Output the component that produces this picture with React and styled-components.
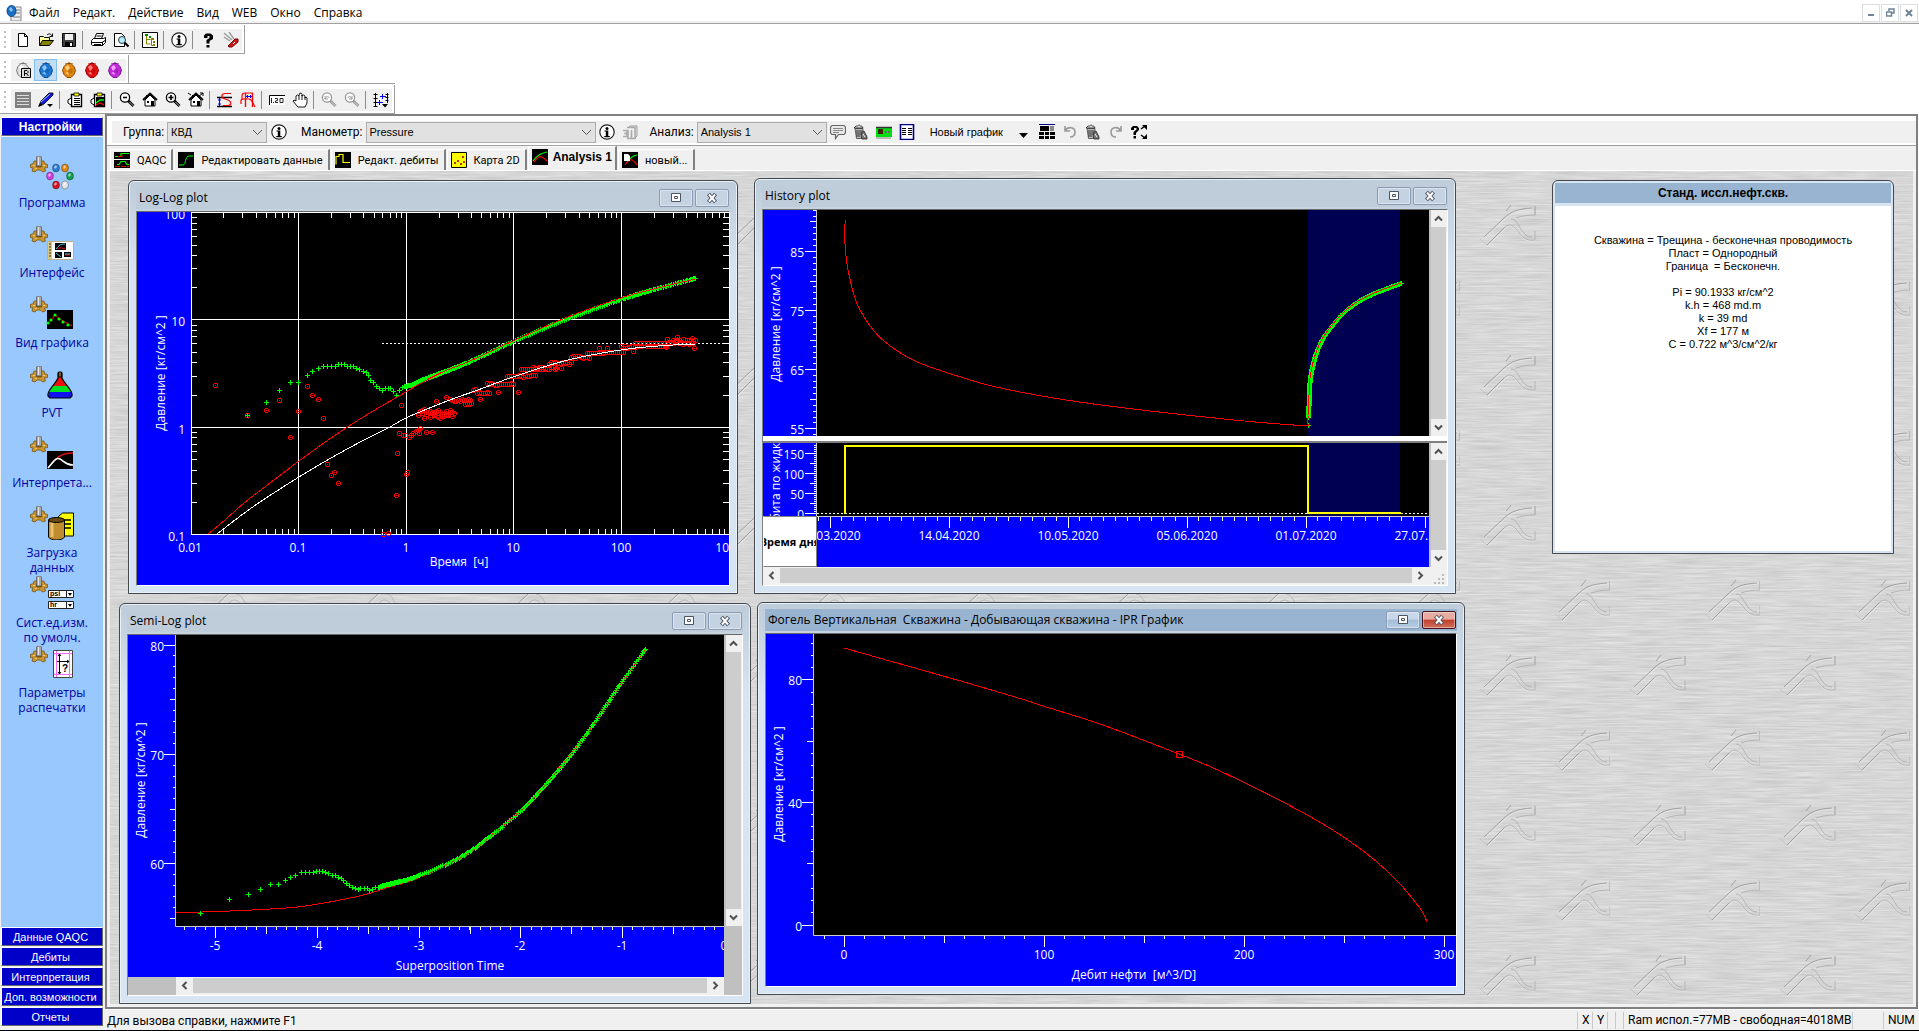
import React, { useState } from 'react';
import styled, { createGlobalStyle } from 'styled-components';

const ui = '"Open Sans", "Noto Sans", sans-serif';
const narrow = 'Roboto, "Open Sans", sans-serif';
const sans = '"Liberation Sans", Arial, sans-serif';

const GlobalStyle = createGlobalStyle`
  * { box-sizing: border-box; }
  body {
    margin: 0;
    background: #fff;
    color: #000;
    font-family: ${ui};
    font-size: 12px;
  }
  button { font-family: inherit; padding: 0; }
`;

/* ---------- helpers ---------- */

// Catmull-Rom interpolation through the knots
function spline(knots, parts = 12) {
  const out = [];
  for (let i = 0; i < knots.length - 1; i++) {
    const a = knots[i - 1] || knots[i];
    const b = knots[i];
    const c = knots[i + 1];
    const d = knots[i + 2] || c;
    for (let k = 0; k < parts; k++) {
      const t = k / parts;
      out.push([0, 1].map((n) => 0.5 * (2 * b[n] + (c[n] - a[n]) * t
        + (2 * a[n] - 5 * b[n] + 4 * c[n] - d[n]) * t * t
        + (3 * b[n] - a[n] - 3 * c[n] + d[n]) * t * t * t)));
    }
  }
  out.push(knots[knots.length - 1]);
  return out;
}

const toPath = (pts) => 'M' + pts.map(([x, y]) => `${x.toFixed(1)} ${y.toFixed(1)}`).join('L');
const line = (knots) => toPath(spline(knots));
const plus = (pts) => pts.map(([x, y]) => {
  const px = Math.round(x);
  const py = Math.round(y);
  return `M${px - 2} ${py}.5h5M${px}.5 ${py - 2}v5`;
}).join('');

const ticks = (from, to, step) => {
  const out = [];
  for (let v = from; v <= to + step / 100; v += step) out.push(v);
  return out;
};

const noise = (n) => {
  const s = Math.sin(n * 127.1) * 43758.5453;
  return s - Math.floor(s);
};

/* ---------- icons ---------- */

const gem = (light, mid, dark) => (
  <>
    <path d="M6 1.500h4l3 3 1.500 4-1.500 4-3 3H6l-3-3-1.500-4L3 4.500z" fill={mid} stroke={dark} />
    <path d="M4 5l3-2 2 3-3 3zM4 11l3-1 1 3z" fill={light} />
    <path d="M9 6l3 2-2 4-3-2z" fill={dark} opacity=".35" />
    <path d="M8 0v1M4.500 1l1 1M11.500 1l-1 1" stroke={dark} />
  </>
);

const info = (
  <>
    <circle cx="8" cy="8" r="7.2" fill="#fff" stroke="#222" strokeWidth="1.2" />
    <circle cx="8" cy="4.4" r="1.5" fill="#000" />
    <path d="M5.500 6.500H9.300V12h1.500v1.200h-5.500V12H6.800V7.500H5.500z" fill="#000" />
  </>
);

const lens = (c) => (
  <>
    <circle cx="6" cy="5.5" r="4.6" fill="#fff" stroke={c} strokeWidth="1.3" />
    <path d="M9.500 9l5 5" stroke={c} strokeWidth="2.800" />
    <path d="M10.500 10l4 4" stroke="#ddd" strokeWidth=".8" />
  </>
);

const home = (
  <>
    <path d="M3 8l5-5 5 5v6H3z" fill="#fff" stroke="#000" />
    <path d="M1 8l7-6.500L15 8" fill="none" stroke="#000" strokeWidth="1.800" />
    <path d="M4 3h2v3H4zM9 9h3v5H9zM5 9h2v2H5z" fill="#000" />
  </>
);

const clip = (
  <>
    <path d="M4.500 2.500h10v12h-10z" fill="#fff" stroke="#000" strokeWidth="1.400" />
    <path d="M7 1h5v3H7z" fill="#ff0" stroke="#000" strokeWidth=".8" />
    <path d="M4 6L1 8v3l3 2" fill="#fff" stroke="#000" />
  </>
);

const trash = (
  <>
    <path d="M2 4.500h8l-.5 10h-6z" fill="#b8b8b8" stroke="#444" strokeWidth=".8" />
    <path d="M1 4L3 2h1.500L6 .8 7.500 2 9 2.200l1 1.800z" fill="#ddd" stroke="#222" strokeWidth=".8" />
    <path d="M4 6v7M6 6v7M8 6v5" stroke="#333" />
    <path d="M9 8l2-1 3 6v2H9l-1-3z" fill="#777" stroke="#222" strokeWidth=".8" />
    <path d="M10 10l2 3" stroke="#eee" />
  </>
);

const blackTile = (inner) => (
  <>
    <path d="M0 0h16v16H0z" fill="#000" />
    <g fill="none">{inner}</g>
  </>
);

const glyphs = {
  doc: <><path d="M5 2h10v14H5z" fill="#eee" stroke="#888" /><path d="M10 5h4M10 8h4M7 12h7" stroke="#777" /><ellipse cx="5.500" cy="6" rx="4.500" ry="5.500" fill="#1c6fc4" stroke="#0b4a8c" /><path d="M3 4l2-2 2 3-2 2z" fill="#8cc8ff" /></>,
  blank: <path d="M3.500 1.500h6l3 3v10h-9zM9.500 1.500v3h3" fill="#fff" stroke="#000" />,
  open: <><path d="M1.500 13.500v-9h4l1 1h5v3" fill="#ffff9c" stroke="#000" /><path d="M1.500 13.500l3-5h11l-4 5z" fill="#848200" stroke="#000" /><path d="M9 3c2-2 4-1 5 1M14.500 1.500v3h-3" fill="none" stroke="#000" /></>,
  save: <><path d="M1.500 1.500h13v13h-13z" fill="#424242" stroke="#000" /><path d="M4 2h8v6H4z" fill="#f0f0f0" /><path d="M4 10h8v4H4z" fill="#000" /><path d="M9 11h2v3H9z" fill="#fff" /></>,
  print: <><path d="M4.500 6.500l2-5h7l-2 5M6.500 4h5" fill="#fff" stroke="#000" /><path d="M1.500 8.500l2-2h10l2-1v5l-3 3h-10l-1-1z" fill="#fff" stroke="#000" /><path d="M2 10.500h10l3-2M4 12.500h7M12.500 10v4" stroke="#000" fill="none" /></>,
  preview: <><path d="M1.500 1.500h7l3 3v10h-10z" fill="#fff" stroke="#000" /><circle cx="9" cy="8" r="3.500" fill="#aef0ff" stroke="#333" /><path d="M11.500 10.500l4 4" stroke="#000" strokeWidth="2.200" /></>,
  tree: <><path d="M.5.5h15v15H.5z" fill="#fff" stroke="#000" /><path d="M4.500 4v8h4M4.500 7.500h4M9.500 7v6.500h3" fill="none" stroke="#848200" /><path d="M3 2h3v2H3zM7 4h2v2H7z" fill="#080" /><path d="M9 6h3v2H9zM11 9h2v2h-2zM11 12h2v2h-2z" fill="#848200" /></>,
  info,
  help: <path d="M4 6V3.500L6 1.500h4.500L13 3.500V7L9.500 9v2.500h-3V8L9.500 6V4H7.500v2zM6.500 13h3v2.500h-3z" fill="#000" />,
  knife: <><path d="M1 1l8 7M1 5l6 4M6 0l5 7" stroke="#999" strokeWidth="1.300" /><path d="M5 14l7-7h3v3l-6 5H6z" fill="#d01818" stroke="#700" /><path d="M10 12l2-2" stroke="#fff" /></>,
  gemR: <>{gem('#fff', '#ddd', '#777')}<path d="M6.500 6.500h9v9h-9z" fill="#ddd" stroke="#000" /><path d="M9.500 14V8.500H12l1 1v1l-1 1H9.500M11.500 11.500L13.500 14" fill="none" stroke="#000" /></>,
  gemBlue: gem('#8cc8ff', '#1c78d2', '#0b4a8c'),
  gemOrange: gem('#ffce74', '#e08414', '#8c4c00'),
  gemRed: gem('#ff8080', '#e01010', '#900'),
  gemPurple: gem('#f4a0ff', '#c028d8', '#781090'),
  list: <><path d="M0 0h16v16H0z" fill="#808080" /><path d="M2 3.500h12M2 6.500h12M2 9.500h12M2 12.500h12" stroke="#ddd" /></>,
  pen: <><path d="M1 14l2-5L11 1l4 0v2L6 12z" fill="#1818d8" stroke="#000" strokeWidth=".8" /><path d="M3 10l9-8" stroke="#9cf" /><path d="M0 15l2-4 3 2zM9 12h6l-3 3z" fill="#000" /></>,
  clip: <>{clip}<path d="M7 6.500h6M7 8.500h6M7 10.500h6M7 12.500h6" stroke="#000" /></>,
  clipPlot: <>{clip}<path d="M6 5h8v9H6z" fill="#000" /><path d="M6 11l4-3h4" stroke="#0f0" fill="none" strokeWidth="1.300" /><path d="M6 13l4-2 4 2" stroke="#f00" fill="none" strokeWidth="1.300" /></>,
  zoomOut: <>{lens('#000')}<path d="M4 5.500h4" stroke="#000" strokeWidth="1.500" /></>,
  zoomIn: <>{lens('#000')}<path d="M3.500 5.500h5M6 3v5" stroke="#000" strokeWidth="1.700" /></>,
  home,
  homeAll: <>{home}<path d="M10 5l5-4M12 1h3v3M0 1l3 2" stroke="#000" fill="none" /></>,
  curveX: <><path d="M0 5.500h15M0 14.500h15" stroke="#000" strokeWidth="1.400" /><path d="M14 1.500H8c-4 0-4 4-1 5l5 2c3 2 2 5-1 5H6" fill="none" stroke="#f00" strokeWidth="1.200" /><path d="M2.500 6v8M1 8h3M1 12h3" stroke="#00f" /></>,
  curveY: <><path d="M5.500 1v14M12.500 1v14" stroke="#f00" strokeWidth="1.400" /><path d="M1 12V9c0-2 1-2 3-2h5c3 0 3 3 6 8M2 8V4c0-2 1-3 3-3h8" fill="none" stroke="#f00" strokeWidth="1.200" /><path d="M6 4.500h6M7.500 3v3M10.500 3v3" stroke="#00f" /></>,
  value: <><path d="M0 3h16v10H0z" fill="#fff" /><path d="M.5 13V3.500H16" fill="none" stroke="#000" /><path d="M2.500 6v5M4.500 10v1M6 6.500h2.500v2L6.500 9v1.500H9M11 6.500h3v4h-3z" fill="none" stroke="#222" /></>,
  hand: <path d="M5 14L1 9l1-1 2 1V4l1.500-1L7 4l.5-2.500L9 1l1 1.500V4l1.500-1L13 4v2l1-1 1 1v5l-2 4H6zM7 4v4M10 3v5M13 5v3" fill="#fff" stroke="#000" strokeWidth=".9" />,
  zoomPrev: <>{lens('#999')}<path d="M4 4v3h3M4 7c1-3 4-3 4-1" stroke="#999" fill="none" /></>,
  zoomNext: <>{lens('#999')}<path d="M8 4v3H5M8 7c-1-3-4-3-4-1" stroke="#999" fill="none" /></>,
  axes: <><path d="M2.500 1v14M.5 2.500h4M.5 6.500h4M.5 10.500h4M.5 14.500h4M14.500 1v10M12.500 2.500h3M12.500 5.500h3M12.500 8.500h3" stroke="#000" /><path d="M7 4.500h6M9.500 2v5M4 10.500h6M6.500 8v5" stroke="#00f" /><path d="M9 12h6l-3 3.500z" fill="#000" /></>,
  box: <><path d="M5 3.500h8v11H6V6M1 6.500h4v3H2M1 12.500h4v-3M9.500 6v8" fill="none" stroke="#aaa" strokeWidth="1.600" /><path d="M6 4l2-2h7v10l-2 2" stroke="#999" fill="none" /></>,
  note: <><path d="M2 1.500h12l1.500 1.500v6L14 10.500H8.500l-3 4v-4H2L.5 9V3z" fill="#e8e8e8" stroke="#666" strokeWidth="1.200" /><path d="M3 4.500h10M3 6.500h10M3 8.500h6" stroke="#888" /></>,
  trash,
  meter: <><path d="M0 3h16v10H0z" fill="#00e010" /><path d="M0 3.500h16" stroke="#333" strokeWidth="1.500" /><path d="M0 14h15" stroke="#bbb" strokeWidth="2" /><path d="M2 5h5v5H2z" fill="#402000" /><path d="M9 7h2v2H9zM12 7h2v2h-2z" fill="#666" /></>,
  report: <><path d="M1.500.5h13v15h-13z" fill="#fff" stroke="#000080" strokeWidth="1.600" /><path d="M3 4.500h4M9 4.500h4M3 6.500h4M9 6.500h4M3 8.500h4M9 8.500h4M3 10.500h4M9 10.500h4" stroke="#000" /></>,
  caret: <path d="M3 9h9l-4.500 5z" fill="#000" />,
  grid: <><path d="M0 .5h16" stroke="#00008b" /><path d="M1 2h9v5H1zM0 8h5v3H0zM6 8h4v3H6zM11 8h5v3h-5zM0 12h5v3H0zM6 12h4v3H6zM11 12h5v3h-5z" fill="#000" /><path d="M11 2h4v5h-4z" fill="#888" /></>,
  undo: <path d="M3 2v5h5M3.500 6.500C6 2 13 3 13 8c0 3-2 5-5 5" fill="none" stroke="#999" strokeWidth="1.600" />,
  redo: <path d="M13 2v5H8M12.500 6.500C10 2 3 3 3 8c0 3 2 5 5 5" fill="none" stroke="#999" strokeWidth="1.600" />,
  helpAll: <><path d="M0 6V4l2-2h4l2 2v2L5 9v2H2.500V8l3-2.500V4H3v2zM2.500 12H5v2.500H2.500z" fill="#000" /><path d="M11 1h5v5zM11 15h5v-5z" fill="#000" /><path d="M10 5l4-3M10 11l4 3" stroke="#000" strokeWidth="1.500" /></>,
  qaqc: blackTile(<><path d="M1 4.500h6V1.500h8M3 12.500h2l2-3h4l2 3h2" stroke="#0f0" strokeWidth="1.200" /><path d="M4 4.500h4v-2" stroke="#f00" /><path d="M0 7.500h16" stroke="#fff" /><path d="M1 14.500h14" stroke="#f00" strokeDasharray="2 1" /></>),
  edit: blackTile(<path d="M1 13h4c3 0 2-9 6-9h4" stroke="#0f0" />),
  rates: blackTile(<path d="M1 12.500V4.500h3v-2h4v8h7" stroke="#ff0" strokeWidth="1.200" />),
  map: <><path d="M.5.5h15v15H.5z" fill="#ff0" stroke="#000" /><path d="M3 10h2v2H3zM6 8h2v2H6zM9 11h2v2H9zM11 4h2v2h-2zM12 9h2v2h-2z" fill="#c03000" /></>,
  plot: blackTile(<><path d="M1 12C5 6 9 4 15 3" stroke="#0f0" strokeWidth="1.200" /><path d="M2 13c5-7 7-7 13-1" stroke="#f00" strokeWidth="1.200" /></>),
  newPlot: blackTile(<><path d="M5 10c3-5 6-6 10-7" stroke="#0f0" strokeWidth="1.200" /><path d="M3 13c5-7 7-7 12 0" stroke="#f00" strokeWidth="1.200" /><path d="M2 2h4l2 2v5H2z" fill="#fff" /></>),
};

const Svg16 = styled.svg`
  display: block;
  width: 16px;
  height: 16px;
  flex: none;
`;

const Icon = ({ name }) => (
  <Svg16 viewBox="0 0 16 16" aria-hidden="true">{glyphs[name]}</Svg16>
);

/* ---------- menu and toolbars ---------- */

const Page = styled.div`
  display: flex;
  flex-direction: column;
  min-height: 100vh;
  border-bottom: 1px solid #000;
`;

const MenuBar = styled.nav`
  display: flex;
  align-items: center;
  height: 24px;
  padding: 2px 0 0 6px;
  border-bottom: 1px solid #a0a0a0;
  box-shadow: inset 0 -2px 0 #f0f0f0;
`;

const MenuItems = styled.div`
  display: flex;
  flex: 1;
  gap: 13px;
  padding-left: 7px;
`;

const MenuButton = styled.button`
  border: 0;
  background: none;
  font-size: 12px;
  line-height: 16px;
`;

const FrameButton = styled.button`
  display: flex;
  align-items: center;
  justify-content: center;
  width: 18px;
  height: 18px;
  margin-right: 1px;
  border: 1px solid #dcdfe2;
  background: #fff;
`;

const Dock = styled.div`
  display: grid;
  width: max-content;
  row-gap: 1px;
  padding-top: 1px;
`;

const DockRow = styled.div`
  justify-self: ${(p) => (p.$short ? 'start' : 'stretch')};
  border-bottom: 1px solid #a0a0a0;
`;

const Toolbar = styled.div`
  display: flex;
  align-items: center;
  width: max-content;
  height: 28px;
  padding: 2px 2px 0 11px;
  border-right: 1px solid #a0a0a0;
  background: radial-gradient(circle at 1px 1px, #c0c0c0 1px, transparent 1px) 4px 6px / 6px 5px no-repeat,
    radial-gradient(circle at 1px 1px, #c0c0c0 1px, transparent 1px) 4px 11px / 6px 5px no-repeat,
    radial-gradient(circle at 1px 1px, #c0c0c0 1px, transparent 1px) 4px 16px / 6px 5px no-repeat,
    radial-gradient(circle at 1px 1px, #c0c0c0 1px, transparent 1px) 4px 21px / 6px 5px no-repeat, #fff;
`;

const ToolStrip = styled.div`
  display: flex;
  height: 22px;
  background: #f0f0f0;
`;

const ToolButton = styled.button`
  display: flex;
  align-items: center;
  justify-content: center;
  width: 23px;
  height: 22px;
  border: 1px solid ${(p) => (p.$on ? '#84bef0' : 'transparent')};
  background: ${(p) => (p.$on ? '#c2dcf4' : 'none')};
`;

const Separator = styled.span`
  width: 1px;
  height: 18px;
  margin: 2px 3px 0 2px;
  background: #8c8c8c;
`;

const toolbars = [
  ['blank', 'open', 'save', '|', 'print', 'preview', '|', 'tree', '|', 'info', '|', 'help', 'knife'],
  ['gemR', 'gemBlue', 'gemOrange', 'gemRed', 'gemPurple'],
  ['list', 'pen', '|', 'clip', 'clipPlot', '|', 'zoomOut', 'home', 'zoomIn', 'homeAll', '|', 'curveX', 'curveY', '|',
    'value', 'hand', '|', 'zoomPrev', 'zoomNext', '|', 'axes'],
];

/* ---------- sidebar ---------- */

const Body = styled.div`
  display: flex;
  flex: 1;
`;

const Sidebar = styled.aside`
  display: flex;
  flex-direction: column;
  flex: none;
  width: 105px;
  padding: 3px 2px 3px 1px;
  background: #f0f0f0;
`;

const Section = styled.button`
  height: 19px;
  margin-bottom: 1px;
  padding-right: 3px;
  border: 1px solid;
  border-color: #fff #696969 #696969 #fff;
  background: #0000c8;
  color: #fff;
  font-size: ${(p) => (p.$open ? 12 : 11)}px;
  font-weight: ${(p) => (p.$open ? 'bold' : 'normal')};
  font-family: ${sans};
  line-height: 16px;
  white-space: nowrap;
`;

const SidePanel = styled.div`
  flex: 1;
  padding-top: 19px;
  background: #99c8ff;
`;

const SideItem = styled.button`
  display: flex;
  flex-direction: column;
  align-items: center;
  gap: 5px;
  width: 100%;
  height: 70px;
  padding: 0 8px;
  border: 0;
  background: none;
  color: #0000a0;
  font-size: 12px;
  line-height: 15px;
`;

const SideIcon = styled.svg`
  flex: none;
  width: 44px;
  height: 34px;
`;

const Gear = () => (
  <>
    <path d="M.5 8.500l3-1 .5-2.500h3l1 1h2l1-1h3l.5 2.500 3 1v3l-3 .5 1 3-3 1-2-2H7l-2 2-3-1 1-3-2.500-.5z" fill="#c89430" stroke="#7a5410" strokeWidth=".8" />
    <path d="M3 9.500h3M12 9.500h3M5 13l2-1" stroke="#f0cc80" />
    <ellipse cx="9" cy="9.500" rx="3.500" ry="2" fill="#7a5410" />
    <path d="M6.500 1l1-1h3l1 1v9h-5z" fill="#a8a8a8" stroke="#555" strokeWidth=".7" />
    <path d="M8.500 1v8" stroke="#e8e8e8" />
  </>
);

const gems = [[26, 12, '#2a80d0'], [35, 12, '#e08414'], [20, 20, '#d040e0'], [40, 20, '#10a050'], [26, 29, '#d81020'], [35, 29, '#e4e4e4']];

const sideItems = [
  {
    label: 'Программа',
    art: gems.map(([x, y, c]) => (
      <g key={c}>
        <ellipse cx={x} cy={y} rx="3.500" ry="4" fill={c} stroke="rgba(0,0,0,.3)" />
        <path d={`M${x - 2} ${y - 1}l2-2 1 2-2 2z`} fill="#fff" opacity=".6" />
      </g>
    )),
  },
  {
    label: 'Интерфейс',
    art: (
      <>
        <path d="M17.500 15.500h26v18h-26z" fill="#fff" stroke="#bbb08a" />
        <path d="M18 16h4v17h-4z" fill="#d8c880" />
        <path d="M19 18h2M19 21h2M19 24h2M19 27h2M19 30h2" stroke="#333" />
        <path d="M25 17h11v7H25zM25 26h7v6h-7zM34 26h7v5h-7z" fill="#000" />
        <path d="M26 23c3-4 5-5 9-5" stroke="#5ce" fill="none" />
        <path d="M27 23c3-2 5-1 8 0M35 29h5" stroke="#f00" fill="none" />
        <path d="M26 27l5 4M35 28h5" stroke="#5ce" />
      </>
    ),
  },
  {
    label: 'Вид графика',
    art: (
      <>
        <path d="M17 14h26v19H17z" fill="#000" />
        <path d="M18 28l7-9 8 6 9 5" stroke="#f00" fill="none" />
        {[[18, 27], [21, 24], [25, 19], [29, 23], [33, 26], [38, 29]].map(([x, y]) => (
          <circle key={x} cx={x} cy={y} r="1.600" fill="#0f0" />
        ))}
      </>
    ),
  },
  {
    label: 'PVT',
    art: (
      <>
        <path d="M28 12v-2h4v2c1 4 4 6 6 9H22c2-3 5-5 6-9z" fill="#f01010" />
        <path d="M22 20h16l3 6H19z" fill="#00e020" />
        <path d="M19 26h23v4l-2 2H20l-2-2z" fill="#1010f0" />
        <path d="M28 7h4v5c1 4 10 12 10 16v2l-2 2H20l-2-2v-2c0-4 9-12 10-16z" fill="none" stroke="#000" strokeWidth="1.200" />
        <path d="M28.500 6h3v5h-3z" fill="#806030" stroke="#000" />
      </>
    ),
  },
  {
    label: 'Интерпрета...',
    art: (
      <>
        <path d="M17 15h26v18H17z" fill="#000" />
        <path d="M25 24c5-5 9-7 18-7" stroke="#e01010" strokeWidth="1.600" fill="none" />
        <path d="M18 32c6-7 8-11 12-9s6 6 13 6" stroke="#fff" strokeWidth="1.600" fill="none" />
      </>
    ),
  },
  {
    label: 'Загрузка данных',
    art: (
      <>
        <path d="M28.500 10.500l4-3.500h11v23h-15z" fill="#ff0" stroke="#000" />
        <path d="M34 14h7M34 18h7M34 22h7" stroke="#000" strokeWidth="1.400" />
        <path d="M18.500 14v17c2 4 14 4 16 0V14" fill="#c08c30" stroke="#000" />
        <path d="M22 16v15" stroke="#e8c070" strokeWidth="3" />
        <ellipse cx="26.500" cy="14" rx="8" ry="2.500" fill="#6a4a10" stroke="#000" />
      </>
    ),
  },
  {
    label: 'Сист.ед.изм. по умолч.',
    art: (
      <>
        <path d="M18.500 14.500h25v7h-25zM18.500 25.500h25v7h-25zM36.500 14.500v7M36.500 25.500v7" fill="#fff" stroke="#222" />
        <path d="M38 17h4l-2 3zM38 28h4l-2 3z" fill="#000" />
        <text x="20" y="20" fontSize="7" fontWeight="bold" fontFamily={sans}>psi</text>
        <text x="20" y="31" fontSize="7" fontWeight="bold" fontFamily={sans}>hr</text>
      </>
    ),
  },
  {
    label: 'Параметры распечатки',
    art: (
      <>
        <path d="M23.500 4.500h19v27h-19z" fill="#fff" stroke="#444" />
        <path d="M26.500 5v26M39.500 5v26M24 7.500h18M24 28.500h18" stroke="#f6f" />
        <path d="M29.500 8v20M27 15.500h12M28 10l1.500-2 1.500 2M28 26l1.500 2 1.500-2M37 14l2 1.500-2 1.500" stroke="#000" fill="none" />
        <text x="32" y="26" fontSize="10" fontWeight="bold" fontFamily={sans}>?</text>
      </>
    ),
  },
];

/* ---------- main area ---------- */

const Workspace = styled.div`
  display: flex;
  flex: 1;
  flex-direction: column;
  min-width: 0;
`;

const Main = styled.main`
  display: flex;
  flex: 1;
  flex-direction: column;
  margin-right: 1px;
  border: 2px solid #808080;
  background: #f0f0f0;
`;

const OptionBar = styled.div`
  display: flex;
  align-items: center;
  height: 30px;
  padding: 5px 0 2px 5px;
  border-bottom: 1px solid #a0a0a0;
  background: #fff;
  font-family: ${narrow};
`;

const OptionStrip = styled.div`
  display: flex;
  flex: 1;
  align-items: center;
  height: 22px;
  padding-left: 11px;
  background: #f0f0f0;
`;

const Field = styled.label`
  display: flex;
  align-items: center;
  gap: 3px;
  margin-left: ${(p) => p.$gap || 0}px;
`;

const SelectBox = styled.span`
  position: relative;
  display: block;
  width: ${(p) => p.$width}px;

  svg {
    position: absolute;
    top: 7px;
    right: 4px;
    pointer-events: none;
  }
`;

const Select = styled.select`
  display: block;
  width: 100%;
  height: 21px;
  padding: 0 3px;
  appearance: none;
  border: 1px solid #adadad;
  border-radius: 0;
  background: #e1e1e1;
  color: #000;
  font-family: ${sans};
  font-size: 11px;
`;

const PlotMenu = styled.button`
  margin: 0 10px 0 11px;
  border: 0;
  background: none;
  font-family: ${sans};
  font-size: 11px;
`;

const Tabs = styled.div`
  display: flex;
  align-items: flex-end;
  height: 25px;
  padding-left: 3px;
  border-bottom: 1px solid #fff;
`;

const Tab = styled.button`
  display: flex;
  align-items: center;
  gap: ${(p) => (p.$active ? 5 : 7)}px;
  height: ${(p) => (p.$active ? 24 : 21)}px;
  margin-right: 1px;
  padding: 0 ${(p) => (p.$active ? '3px 3px' : '5px 0')} 3px;
  border: 0;
  border-top: 1px solid #fff;
  border-right: 2px solid #808080;
  border-left: 1px solid #fff;
  background: none;
  font-size: ${(p) => (p.$active ? 12 : 11)}px;
  font-weight: ${(p) => (p.$active ? 'bold' : 'normal')};
  font-family: ${(p) => (p.$active ? sans : narrow)};
  white-space: nowrap;
`;

const Desk = styled.div`
  position: relative;
  flex: 1;
  min-height: 600px;
  margin: 0 3px 3px;
  overflow: hidden;
`;

const Metal = styled.svg`
  display: block;
  position: absolute;
  inset: 0;
  width: 100%;
  height: 100%;
`;

const Emblem = ({ x, y }) => (
  <g transform={`translate(${x} ${y})`} fill="none">
    <path d="M5 34L24 16C31 9 38 6 53 5M8 42l17-17c4-4 7-4 11 1 6 8 9 12 19 11" stroke="#e4e4e4" />
    <path d="M4 33L23 15C31 7 38 5 52 4M31 1l-5 6M7 41l17-17M55 2v9" stroke="#a0a0a0" />
    <path d="M55 11c-8 0-13 1-19 3M24 24c5-5 8-3 12 1 6 8 9 12 19 11v-9M31 15c8-1 9 18 21 18" stroke="#b4b4b4" />
    <path d="M0 35l7 6" stroke="#c4c4c4" />
  </g>
);

const Backdrop = () => (
  <Metal aria-hidden="true">
    <defs>
      <filter id="brushed" x="0" y="0" width="100%" height="100%" colorInterpolationFilters="sRGB">
        <feTurbulence type="fractalNoise" baseFrequency="0.025 0.6" numOctaves="3" seed="4" />
        <feColorMatrix values="0.15 0 0 0 0.765  0.15 0 0 0 0.765  0.15 0 0 0 0.765  0 0 0 0 1" />
      </filter>
      <pattern id="emblems" width="150" height="150" patternUnits="userSpaceOnUse">
        <Emblem x={20} y={33} />
        <Emblem x={95} y={108} />
      </pattern>
    </defs>
    <rect width="100%" height="100%" fill="#d6d6d6" />
    <rect width="100%" height="100%" filter="url(#brushed)" />
    <rect width="100%" height="100%" fill="url(#emblems)" />
  </Metal>
);

/* ---------- child windows ---------- */

const WindowFrame = styled.section`
  position: absolute;
  left: ${(p) => p.$x}px;
  top: ${(p) => p.$y}px;
  width: ${(p) => p.$w}px;
  padding: 0 7px 7px;
  border: 1px solid #45494e;
  border-radius: 6px 6px 0 0;
  background: linear-gradient(#bfcddb 0, #c6d4e2 31px, #d7e4f2 90px);
  box-shadow: inset 0 0 0 1px #e8f0f8;
`;

const TitleBar = styled.header`
  display: flex;
  align-items: center;
  gap: 2px;
  height: 22px;
  margin: 6px 0 2px;
  padding: 0 1px 0 3px;
  background: ${(p) => (p.$active ? '#99b4d1' : '#bfcddb')};

  h2 {
    flex: 1;
    margin: 0;
    font-size: 12px;
    font-weight: normal;
    line-height: 16px;
    white-space: pre;
  }
`;

const CaptionButton = styled.button`
  display: flex;
  align-items: center;
  justify-content: center;
  width: 34px;
  height: 18px;
  border: 1px solid ${(p) => (p.$red ? '#431420' : '#8b9bb5')};
  border-radius: 2px;
  background: ${(p) => (p.$red ? 'linear-gradient(#e8aba0 45%, #c0402c 50%, #d4705c)'
    : p.$active ? 'linear-gradient(#c8d8ea 45%, #a4bcd6 50%, #b8cee6)' : '#c4d2e2')};
  box-shadow: inset 0 0 0 1px rgba(255, 255, 255, 0.4);
`;

const Client = styled.div`
  border: 1px solid;
  border-color: #696969 #fff #fff #808080;
  background: #0000ff;
`;

const ChildWindow = ({ title, active, x, y, w, children }) => (
  <WindowFrame $x={x} $y={y} $w={w}>
    <TitleBar $active={active}>
      <h2>{title}</h2>
      <CaptionButton $active={active} aria-label="Развернуть">
        <svg width="12" height="12"><path d="M1.500 1.500h9v8h-9z" fill="#fff" stroke="#4a5566" /><path d="M4.500 4.500h3v2h-3z" fill="#fff" stroke="#4a5566" /></svg>
      </CaptionButton>
      <CaptionButton $red={active} aria-label="Закрыть">
        <svg width="12" height="12"><path d="M2.500 2l7 8M9.500 2l-7 8" stroke="#4a5566" strokeWidth="4" /><path d="M3 2.500l6 7M9 2.500l-6 7" stroke="#fff" strokeWidth="2" /></svg>
      </CaptionButton>
    </TitleBar>
    <Client>{children}</Client>
  </WindowFrame>
);

const Chart = styled.svg`
  display: block;
  flex: none;
  width: ${(p) => p.$w}px;
  height: ${(p) => p.$h}px;
  background: #0000ff;
  font-family: ${ui};
  font-size: 12px;
  fill: none;

  text { fill: #fff; }
`;

const PressureTitle = ({ x, y }) => (
  <text transform={`translate(${x} ${y}) rotate(-90)`} textAnchor="middle" xmlSpace="preserve">Давление [кг/см^2 ]</text>
);

// One linear axis: [step, tick length] pairs drawn from the same origin
const axisPath = (vertical, at, toPx, from, to, sets) => sets.map(([step, len]) => ticks(from(step), to, step)
  .map((v) => (vertical ? `M${at} ${Math.round(toPx(v))}.5h${-len}` : `M${Math.round(toPx(v))}.5 ${at}v${len}`)).join('')).join('');

const snap = (min) => (step) => Math.ceil(min / step - 0.001) * step;

/* Log-Log */

const llModel = [[71, 322], [88, 308], [107, 291], [129, 274], [162, 249], [194, 226], [223, 207], [243, 195], [269, 180],
  [284, 171], [308, 159], [333, 149], [376, 129], [431, 105], [484, 86], [517, 77], [558, 67]];
const llDerivative = [[80, 322], [98, 308], [113, 297], [129, 286], [162, 265], [194, 246], [227, 228], [251, 216], [269, 206],
  [300, 193], [321, 185], [341, 178], [376, 165], [431, 148], [484, 138], [521, 134], [558, 132]];
const llEarly = [[110, 203], [129, 190], [142, 178], [153, 170], [161, 170], [170, 163], [175, 159], [181, 156], [186, 154],
  [190, 154], [194, 154], [198, 154], [201, 152], [204, 152], [207, 152], [210, 154], [213, 154], [216, 154], [219, 156],
  [222, 157], [226, 159], [229, 160], [231, 163], [233, 168], [236, 170], [239, 174], [242, 176], [245, 178], [248, 176],
  [251, 176], [253, 176], [256, 179], [259, 183], [262, 178], [265, 175]];
const llLate = spline([[267, 174], [276, 172], [284, 168], [300, 162], [308, 159], [333, 149], [376, 129], [431, 106], [484, 87],
  [517, 77], [558, 66]], 28);

const llScatter = [[78, 173], [110, 203], [129, 198], [142, 188], [153, 225], [161, 199], [170, 174], [175, 183], [181, 187],
  [186, 206], [190, 252], [194, 263], [197, 260], [201, 271], [246, 322], [251, 321], [259, 283], [260, 241], [264, 193],
  [269, 262], [270, 260], [262, 221], [266, 223], [268, 223], [272, 225], [274, 223], [276, 221], [279, 219], [281, 218],
  [283, 216], [282, 221], [289, 220], [295, 220], [299, 189], [309, 185], [336, 178], [338, 177], [343, 187], [361, 180], [381, 180],
  [412, 152], [419, 156], [424, 156], [462, 136], [470, 136], [496, 139], [529, 135], [540, 125], [555, 126], [557, 136]];
// horizontal runs: from, to, y, spread
const llRuns = [[281, 318, 203, 4], [285, 316, 200, 3], [313, 334, 188, 1], [328, 335, 192, 1],
  [340, 352, 181, 1], [350, 376, 172, 1], [370, 398, 164, 1], [384, 412, 157, 0], [394, 418, 156, 1], [414, 435, 151, 1],
  [434, 452, 145, 1], [450, 466, 141, 0], [466, 486, 140, 0], [484, 505, 135, 1], [498, 528, 131, 0], [510, 528, 134, 0],
  [528, 558, 129, 2], [530, 556, 131, 1]];
llRuns.forEach(([a, b, y, s]) => {
  for (let x = a; x <= b; x += 2) llScatter.push([x, Math.round(y + (noise(x + y) - 0.5) * 2 * s)]);
});
const circles = llScatter.map(([x, y]) => `M${x - 1}.5 ${y - 2}.5h2l1 1v2l-1 1h-2l-1 -1v-2zM${x}.5 ${y}v1`).join('');

const llX = (d) => Math.round(54 + 107.6 * (d + 2));
const llY = (d) => Math.round(215 - 107.4 * d);
const logTicks = [2, 3, 4, 5, 6, 7, 8, 9].map(Math.log10);

const LogLogPlot = () => {
  let minor = '';
  [-2, -1, 0, 1, 2].forEach((d) => logTicks.forEach((l) => {
    minor += `M${llX(d + l)}.5 0v6M${llX(d + l)}.5 323v-6`;
  }));
  [-1, 0, 1].forEach((d) => logTicks.forEach((l) => {
    minor += `M54 ${llY(d + l)}.5h6M592 ${llY(d + l)}.5h-6`;
  }));
  return (
    <Chart $w={592} $h={373}>
      <path d="M54 0h538v323H54z" fill="#000" />
      <path d="M54.5 0v323M54 322.500H592M54 .5h538M161.500 0v323M269.500 0v323M376.500 0v323M484.500 0v323M54 107.500h538M54 215.500h538" stroke="#fff" />
      <path d={minor} stroke="#fff" />
      <path d="M245 131.500h347" stroke="#fff" strokeDasharray="2 2" />
      <path d={circles} stroke="#f00" shapeRendering="crispEdges" />
      <path d={plus(llEarly.concat(llLate))} stroke="#0f0" shapeRendering="crispEdges" />
      <path d={line(llModel)} stroke="#f00" shapeRendering="crispEdges" />
      <path d={line(llDerivative)} stroke="#fff" shapeRendering="crispEdges" />
      <g textAnchor="end">
        <text x="48" y="7">100</text>
        <text x="48" y="114">10</text>
        <text x="48" y="222">1</text>
        <text x="48" y="329">0.1</text>
      </g>
      <g textAnchor="middle">
        <text x="53" y="340">0.01</text>
        <text x="161" y="340">0.1</text>
        <text x="269" y="340">1</text>
        <text x="376" y="340">10</text>
        <text x="484" y="340">100</text>
        <text x="592" y="340">1000</text>
        <text x="322" y="354" xmlSpace="preserve">Время  [ч]</text>
      </g>
      <PressureTitle x={28} y={161} />
    </Chart>
  );
};

/* History */

const Row = styled.div`
  display: flex;
`;

const Splitter = styled.div`
  height: 7px;
  border-bottom: 2px solid #808080;
  background: #fff;
`;

const TimeCell = styled.div`
  display: flex;
  align-items: center;
  justify-content: center;
  flex: none;
  width: 54px;
  height: 51px;
  overflow: hidden;
  border: 1px solid;
  border-color: #808080 #808080 #808080 #fff;
  background: #fff;
  font-size: 11px;
  font-weight: bold;
  white-space: nowrap;
`;

const hModel = [[82, 10], [82, 34], [84, 54], [87, 69], [91, 85], [96, 98], [103, 110], [111, 121], [121, 131], [136, 142],
  [152, 151], [170, 158], [185, 163], [221, 174], [257, 182], [303, 190], [354, 197], [423, 205], [492, 212], [545, 216]];
const hBuild = [[545, 207], [546, 185], [547, 168], [551, 149], [558, 131], [569, 115], [582, 101], [597, 90], [616, 81], [638, 73]];

const hY = (v) => 41 + (85 - v) * 5.913;
const qY = (v) => 70 - v * 0.4;
const tX = (v) => 12.5 + v * 11.9;

const HistoryTop = () => (
  <Chart $w={666} $h={226}>
    <path d="M54 0h612v226H54z" fill="#000" />
    <path d="M545 0h92v226h-92z" fill="#000050" />
    <path d="M53.500 0v226" stroke="#ccc" />
    <path d={axisPath(true, 53, hY, snap(54), 92, [[1, 3], [5, 6]]) + [55, 65, 75, 85].map((v) => `M53 ${Math.round(hY(v))}.5h-11`).join('')} stroke="#fff" />
    <path d={plus([...spline(hBuild, 24), [545, 215]])} stroke="#0f0" shapeRendering="crispEdges" />
    <path d={line(hModel)} stroke="#f00" shapeRendering="crispEdges" />
    <path d={line([[545, 216], ...hBuild])} stroke="#f00" shapeRendering="crispEdges" />
    <g textAnchor="end">
      {[85, 75, 65, 55].map((v) => <text key={v} x="41" y={Math.round(hY(v)) + 6}>{v}</text>)}
    </g>
    <PressureTitle x={17} y={114} />
  </Chart>
);

const HistoryRate = () => (
  <Chart $w={666} $h={73}>
    <path d="M54 0h612v73H54z" fill="#000" />
    <path d="M545 0h92v73h-92z" fill="#000050" />
    <path d="M53.500 0v73" stroke="#ccc" />
    <path d={axisPath(true, 53, qY, () => 0, 172, [[5, 2], [25, 6], [50, 11]])} stroke="#fff" />
    <path d="M54 70.500h612" stroke="#fff" strokeDasharray="2 2" />
    <path d="M82 71V3h463v67h93" stroke="#ff0" strokeWidth="2" />
    <g textAnchor="end">
      {[150, 100, 50, 0].map((v) => <text key={v} x="41" y={qY(v) + 6}>{v}</text>)}
    </g>
    <text transform="translate(17 33) rotate(-90)" textAnchor="middle">Дебита по жидкости</text>
  </Chart>
);

const TimeAxis = () => (
  <Chart $w={612} $h={51}>
    <path d="M0 .5h612" stroke="#ccc" />
    <path d={axisPath(false, 1, tX, () => -1, 50, [[1, 4]]) + [0, 10, 20, 30, 40, 50].map((v) => `M${Math.round(tX(v))}.5 1v11`).join('')} stroke="#fff" />
    <g textAnchor="middle">
      {['19.03.2020', '14.04.2020', '10.05.2020', '05.06.2020', '01.07.2020', '27.07.2020'].map((d, i) => (
        <text key={d} x={Math.round(tX(i * 10))} y="24">{d}</text>
      ))}
    </g>
  </Chart>
);

/* scroll bars */

const ScrollTrack = styled.div`
  display: flex;
  flex: ${(p) => (p.$fill ? 1 : 'none')};
  flex-direction: ${(p) => (p.$across ? 'row' : 'column')};
  ${(p) => (p.$across ? 'height: 18px; padding: 1px 0 2px;' : 'width: 18px; padding: 0 1px 0 2px; box-shadow: inset 2px 0 0 #c0c0c0;')}
  background-color: #f0f0f0;
`;

const ScrollArrow = styled.button`
  display: flex;
  align-items: center;
  justify-content: center;
  flex: none;
  width: ${(p) => (p.$across ? 17 : 15)}px;
  height: ${(p) => (p.$across ? 15 : 17)}px;
  border: 0;
  background: #f0f0f0;

  svg { transform: rotate(${(p) => p.$turn}deg); }
`;

const Thumb = styled.div`
  flex: 1;
  background: #cdcdcd;
`;

const Arrow = ({ turn, across, label }) => (
  <ScrollArrow $turn={turn} $across={across} aria-label={label}>
    <svg width="9" height="9"><path d="M1 6.500L4.500 3 8 6.500" stroke="#505050" strokeWidth="2" fill="none" /></svg>
  </ScrollArrow>
);

const ScrollBar = ({ across, fill }) => (
  <ScrollTrack $across={across} $fill={fill}>
    <Arrow turn={across ? -90 : 0} across={across} label={across ? 'Влево' : 'Вверх'} />
    <Thumb />
    <Arrow turn={across ? 90 : 180} across={across} label={across ? 'Вправо' : 'Вниз'} />
  </ScrollTrack>
);

const Grip = styled.svg`
  width: 18px;
  height: 18px;
  background: #f0f0f0;
`;

const HistoryPlot = () => (
  <>
    <Row>
      <HistoryTop />
      <ScrollBar />
    </Row>
    <Splitter />
    <Row>
      <div>
        <HistoryRate />
        <Row>
          <TimeCell>Время дня</TimeCell>
          <TimeAxis />
        </Row>
      </div>
      <ScrollBar />
    </Row>
    <Row>
      <ScrollBar across fill />
      <Grip><path d="M13 7h2v2h-2zM9 11h2v2H9zM13 11h2v2h-2zM5 15h2v2H5zM9 15h2v2H9zM13 15h2v2h-2z" fill="#bbb" /></Grip>
    </Row>
  </>
);

/* Semi-Log */

const sModel = [[48, 277], [72, 277], [102, 276], [142, 274], [169, 272], [196, 268], [222, 263], [243, 258], [264, 251],
  [291, 242], [322, 227], [343, 216], [363, 200], [392, 176], [413, 154], [434, 129], [455, 103], [475, 75], [494, 47], [517, 14]];
const sEarly = [[72, 278], [101, 264], [120, 259], [132, 254], [142, 249], [150, 249], [157, 245], [162, 242], [167, 240],
  [173, 237], [177, 237], [181, 237], [185, 237], [188, 236], [191, 236], [194, 236], [197, 237], [200, 238], [204, 240],
  [207, 240], [210, 242], [213, 243], [215, 245], [218, 248], [221, 250], [224, 252], [227, 253], [230, 254], [232, 253],
  [236, 253], [239, 253], [241, 255], [244, 254], [247, 252]];
const sLate = spline([[250, 252], [256, 250], [268, 247], [280, 244], [291, 240], [322, 227], [343, 215], [363, 200], [392, 176],
  [413, 154], [434, 130], [455, 103], [475, 74], [494, 46], [517, 14]], 16);
const sY = (v) => 9.5 + (80 - v) * 10.94;
const sX = (v) => 596 + v * 101.8;

const SemiGrid = styled.div`
  display: grid;
  grid-template-columns: 48px 1fr 18px;
  grid-template-rows: 291px 51px 18px;
  background: #c0c0c0;
`;

const PlotCell = styled.div`
  display: flex;
  grid-area: 1 / 1 / 3 / 3;
`;

const BarCell = styled.div`
  display: flex;
  grid-area: ${(p) => p.$area};
`;

const SemiLogPlot = () => (
  <SemiGrid>
    <PlotCell>
      <Chart $w={596} $h={342}>
        <path d="M48 0h548v291H48z" fill="#000" />
        <path d="M47.500 0v291.500H596" stroke="#ccc" />
        <path d={axisPath(true, 47, sY, snap(55), 80, [[1, 2], [5, 5], [10, 11]])} stroke="#fff" />
        <path d={axisPath(false, 292, sX, snap(-5.3), 0, [[0.1, 3], [0.5, 7], [1, 11]])} stroke="#fff" />
        <path d={line(sModel)} stroke="#f00" shapeRendering="crispEdges" />
        <path d={plus(sEarly.concat(sLate))} stroke="#0f0" shapeRendering="crispEdges" />
        <path d={line(sModel.slice(8).map(([x, y]) => [x, y + 1]))} stroke="#f00" strokeDasharray="4 4" />
        <g textAnchor="end">
          {[80, 70, 60].map((v) => <text key={v} x="36" y={Math.round(sY(v)) + 6}>{v}</text>)}
        </g>
        <g textAnchor="middle">
          {[-5, -4, -3, -2, -1, 0].map((v) => <text key={v} x={Math.round(sX(v))} y="315">{v}</text>)}
          <text x="322" y="335">Superposition Time</text>
        </g>
        <PressureTitle x={17} y={145} />
      </Chart>
    </PlotCell>
    <BarCell $area="1 / 3"><ScrollBar /></BarCell>
    <BarCell $area="3 / 2"><ScrollBar across fill /></BarCell>
  </SemiGrid>
);

/* IPR */

const iprCurve = [[78, 14], [138, 31], [198, 48], [259, 66], [277, 72], [319, 85], [356, 98], [413, 120], [445, 133], [477, 148],
  [519, 169], [557, 190], [589, 211], [612, 229], [633, 249], [650, 269], [657, 279], [661, 288]];
const iY = (v) => 290.5 - v * 3.065;
const iX = (v) => 77.5 + v * 2;

const IprPlot = () => (
  <Chart $w={690} $h={352}>
    <path d="M48 0h642v301H48z" fill="#000" />
    <path d="M47.500 0v301.500H690" stroke="#ccc" />
    <path d={axisPath(true, 47, iY, () => 0, 92, [[4, 2], [20, 6], [40, 11]])} stroke="#fff" />
    <path d={axisPath(false, 302, iX, snap(-10), 300, [[10, 3], [50, 7], [100, 11]])} stroke="#fff" />
    <path d={line(iprCurve)} stroke="#f00" shapeRendering="crispEdges" />
    <path d="M410.500 117.500h6v6h-6z" stroke="#f00" shapeRendering="crispEdges" />
    <g textAnchor="end">
      {[80, 40, 0].map((v) => <text key={v} x="36" y={Math.round(iY(v)) + 6}>{v}</text>)}
    </g>
    <g textAnchor="middle">
      {[0, 100, 200, 300].map((v) => <text key={v} x={Math.round(iX(v))} y="325">{v}</text>)}
      <text x="368" y="345" xmlSpace="preserve">Дебит нефти  [м^3/D]</text>
    </g>
    <PressureTitle x={17} y={150} />
  </Chart>
);

/* result panel */

const Results = styled.section`
  position: absolute;
  left: 1442px;
  top: 9px;
  display: flex;
  flex-direction: column;
  width: 342px;
  height: 374px;
  padding: 2px;
  border: 1px solid #45494e;
  border-radius: 6px 6px 0 0;
  background: #d7e4f2;
  font-family: ${sans};

  h2 {
    margin: 0 0 3px;
    background: #99b4d1;
    font-size: 12px;
    line-height: 20px;
    text-align: center;
  }
`;

const ResultText = styled.pre`
  flex: 1;
  margin: 0;
  padding-top: 28px;
  background: #fff;
  font-family: ${sans};
  font-size: 11px;
  line-height: 13px;
  text-align: center;
`;

const results = `Скважина = Трещина - бесконечная проводимость
Пласт = Однородный
Граница  = Бесконечн.

Pi = 90.1933 кг/см^2
k.h = 468 md.m
k = 39 md
Xf = 177 м
C = 0.722 м^3/см^2/кг`;

/* status bar */

const StatusBar = styled.footer`
  display: flex;
  align-items: center;
  height: 21px;
  padding: 1px 1px 0 2px;
  border-top: 1px solid #fff;
  background: #f0f0f0;
  font-family: ${narrow};
`;

const StatusText = styled.span`
  flex: 1;
`;

const StatusCell = styled.span`
  width: ${(p) => p.$w}px;
  height: 17px;
  padding-left: 4px;
  border-left: 1px solid #c8c8c8;
  line-height: 17px;
  white-space: nowrap;
`;

const status = [['X', 15], ['Y', 15], ['', 8], ['', 8], ['Ram испол.=77MB - свободная=4018MB', 229], ['', 31], ['NUM', 35]];

const tabs = [
  ['qaqc', 'QAQC'],
  ['edit', 'Редактировать данные'],
  ['rates', 'Редакт. дебиты'],
  ['map', 'Карта 2D'],
  ['plot', 'Analysis 1'],
  ['newPlot', 'новый...'],
];

const Picker = ({ label, value, width, gap }) => (
  <Field $gap={gap}>
    {label}
    <SelectBox $width={width}>
      <Select defaultValue={value}>
        <option>{value}</option>
      </Select>
      <svg width="11" height="7"><path d="M1 1l4.500 4.500L10 1" fill="none" stroke="#555" /></svg>
    </SelectBox>
  </Field>
);

const Tool = ({ name, on, onClick }) => (
  <ToolButton $on={on} onClick={onClick} aria-label={name}>
    <Icon name={name} />
  </ToolButton>
);

function App() {
  const [tab, setTab] = useState('Analysis 1');
  const [gemOn, setGemOn] = useState('gemBlue');

  return (
    <Page>
      <GlobalStyle />
      <MenuBar>
        <Icon name="doc" />
        <MenuItems>
          {['Файл', 'Редакт.', 'Действие', 'Вид', 'WEB', 'Окно', 'Справка'].map((m) => <MenuButton key={m}>{m}</MenuButton>)}
        </MenuItems>
        <FrameButton aria-label="Свернуть"><svg width="8" height="8"><path d="M1 6h6" stroke="#6f8399" strokeWidth="2" /></svg></FrameButton>
        <FrameButton aria-label="Восстановить"><svg width="9" height="9"><path d="M.5 4h5v4h-5zM3 3V1h5v4H6" fill="none" stroke="#6f8399" strokeWidth="1.500" /></svg></FrameButton>
        <FrameButton aria-label="Закрыть"><svg width="8" height="8"><path d="M1 1l6 6M7 1L1 7" stroke="#6f8399" strokeWidth="2" /></svg></FrameButton>
      </MenuBar>

      <Dock>
        {toolbars.map((bar, i) => (
          <DockRow key={i} $short={i === 0}>
            <Toolbar>
              <ToolStrip>
                {bar.map((name, k) => (name === '|' ? <Separator key={k} /> : (
                  <Tool key={k} name={name} on={name === gemOn} onClick={() => i === 1 && setGemOn(name)} />
                )))}
              </ToolStrip>
            </Toolbar>
          </DockRow>
        ))}
      </Dock>

      <Body>
        <Sidebar>
          <Section $open>Настройки</Section>
          <SidePanel>
            {sideItems.map(({ label, art }) => (
              <SideItem key={label}>
                <SideIcon viewBox="0 0 44 34" aria-hidden="true"><Gear />{art}</SideIcon>
                {label}
              </SideItem>
            ))}
          </SidePanel>
          {['Данные QAQC', 'Дебиты', 'Интерпретация', 'Доп. возможности', 'Отчеты'].map((s) => <Section key={s}>{s}</Section>)}
        </Sidebar>

        <Workspace>
          <Main>
            <OptionBar>
              <OptionStrip>
                <Picker label="Группа:" value="КВД" width={100} />
                <Tool name="info" />
                <Picker label="Манометр:" value="Pressure" width={230} gap={11} />
                <Tool name="info" />
                <Tool name="box" />
                <Picker label="Анализ:" value="Analysis 1" width={130} gap={8} />
                {['note', 'trash', 'meter', 'report'].map((n) => <Tool key={n} name={n} />)}
                <PlotMenu>Новый график</PlotMenu>
                {['caret', 'grid', 'undo', 'trash', 'redo', 'helpAll'].map((n, i) => <Tool key={i} name={n} />)}
              </OptionStrip>
            </OptionBar>
            <Tabs>
              {tabs.map(([icon, name]) => (
                <Tab key={name} $active={name === tab} onClick={() => setTab(name)}>
                  <Icon name={icon} />
                  {name}
                </Tab>
              ))}
            </Tabs>
            <Desk>
              <Backdrop />
              <ChildWindow title="Log-Log plot" x={18} y={9} w={610}><LogLogPlot /></ChildWindow>
              <ChildWindow title="History plot" x={644} y={7} w={702}><HistoryPlot /></ChildWindow>
              <ChildWindow title="Semi-Log plot" x={9} y={432} w={632}><SemiLogPlot /></ChildWindow>
              <ChildWindow title="Фогель Вертикальная  Скважина - Добывающая скважина - IPR График" active x={647} y={431} w={708}>
                <IprPlot />
              </ChildWindow>
              <Results>
                <h2>Станд. иссл.нефт.скв.</h2>
                <ResultText>{results}</ResultText>
              </Results>
            </Desk>
          </Main>
          <StatusBar>
            <StatusText>Для вызова справки, нажмите F1</StatusText>
            {status.map(([text, w], i) => <StatusCell key={i} $w={w}>{text}</StatusCell>)}
          </StatusBar>
        </Workspace>
      </Body>
    </Page>
  );
}

export default App;
